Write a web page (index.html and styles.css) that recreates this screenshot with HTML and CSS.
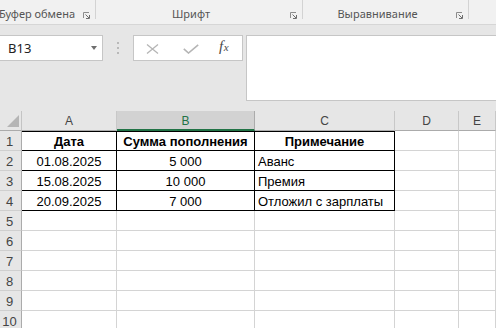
FILE: index.html
```html
<!DOCTYPE html>
<html lang="ru">
<head>
<meta charset="utf-8">
<title>Excel</title>
<link rel="stylesheet" href="styles.css">
</head>
<body>
<div class="ribbon">
  <div class="group g1"><span class="label">Буфер обмена</span><span class="launch"><svg width="7" height="7" viewBox="0 0 7 7"><path d="M0.5 6V0.5H6" fill="none" stroke="#8c8c8c"/><path d="M2.5 2.5L6 6M3 6.5H6.5V3" fill="none" stroke="#6e6e6e"/></svg></span></div>
  <div class="sep"></div>
  <div class="group g2"><span class="label">Шрифт</span><span class="launch"><svg width="7" height="7" viewBox="0 0 7 7"><path d="M0.5 6V0.5H6" fill="none" stroke="#8c8c8c"/><path d="M2.5 2.5L6 6M3 6.5H6.5V3" fill="none" stroke="#6e6e6e"/></svg></span></div>
  <div class="sep"></div>
  <div class="group g3"><span class="label">Выравнивание</span><span class="launch"><svg width="7" height="7" viewBox="0 0 7 7"><path d="M0.5 6V0.5H6" fill="none" stroke="#8c8c8c"/><path d="M2.5 2.5L6 6M3 6.5H6.5V3" fill="none" stroke="#6e6e6e"/></svg></span></div>
  <div class="sep"></div>
  <div class="group g4"></div>
</div>

<div class="fbar">
  <div class="namebox"><span class="ref">B13</span><span class="caret"></span></div>
  <div class="grip"><i></i><i></i><i></i></div>
  <div class="fbtns">
    <svg class="ico-x" width="13" height="10" viewBox="0 0 13 10"><path d="M1 0.5L12 9.5M12 0.5L1 9.5" stroke="#b5b5b5" stroke-width="1.3" fill="none"/></svg>
    <svg class="ico-ok" width="16" height="10" viewBox="0 0 16 10"><path d="M0.8 4.8L5.5 9L15.2 0.8" stroke="#b5b5b5" stroke-width="1.6" fill="none"/></svg>
    <span class="fx">f<span class="fx-x">x</span></span>
  </div>
  <div class="finput"></div>
</div>

<div class="sheet">
  <div class="corner"><span class="tri"></span></div>
  <div class="ch">A</div><div class="ch sel">B</div><div class="ch">C</div><div class="ch">D</div><div class="ch">E</div>

  <div class="rh">1</div>
  <div class="c t tt ctr bold">Дата</div>
  <div class="c t tt ctr bold">Сумма пополнения</div>
  <div class="c t tt ctr bold">Примечание</div>
  <div class="c"></div><div class="c"></div>

  <div class="rh">2</div>
  <div class="c t ctr">01.08.2025</div>
  <div class="c t ctr">5 000</div>
  <div class="c t">Аванс</div>
  <div class="c"></div><div class="c"></div>

  <div class="rh">3</div>
  <div class="c t ctr">15.08.2025</div>
  <div class="c t ctr">10 000</div>
  <div class="c t">Премия</div>
  <div class="c"></div><div class="c"></div>

  <div class="rh">4</div>
  <div class="c t ctr">20.09.2025</div>
  <div class="c t ctr">7 000</div>
  <div class="c t">Отложил с зарплаты</div>
  <div class="c"></div><div class="c"></div>

  <div class="rh">5</div><div class="c"></div><div class="c"></div><div class="c"></div><div class="c"></div><div class="c"></div>
  <div class="rh">6</div><div class="c"></div><div class="c"></div><div class="c"></div><div class="c"></div><div class="c"></div>
  <div class="rh">7</div><div class="c"></div><div class="c"></div><div class="c"></div><div class="c"></div><div class="c"></div>
  <div class="rh">8</div><div class="c"></div><div class="c"></div><div class="c"></div><div class="c"></div><div class="c"></div>
  <div class="rh">9</div><div class="c"></div><div class="c"></div><div class="c"></div><div class="c"></div><div class="c"></div>
  <div class="rh">10</div><div class="c"></div><div class="c"></div><div class="c"></div><div class="c"></div><div class="c"></div>
</div>
</body>
</html>
```

FILE: styles.css
```css
* { box-sizing: border-box; }

html, body {
  margin: 0;
  padding: 0;
}

body {
  width: 496px;
  height: 328px;
  overflow: hidden;
  background: #e6e6e6;
  font-family: "Liberation Sans", Arial, sans-serif;
  color: #000;
}

/* ---------- Ribbon group labels ---------- */
.ribbon {
  display: flex;
  height: 25px;
  background: #f1f1f1;
  border-bottom: 1px solid #d6d6d6;
  overflow: hidden;
}

.group {
  display: flex;
  align-items: flex-end;
  height: 24px;
  padding-bottom: 3px;
}

.g1 { width: 95px; }
.g2 { width: 206px; }
.g3 { width: 165px; }
.g4 { flex: 1; }

.label {
  flex: 1;
  text-align: center;
  white-space: nowrap;
  font-family: "Noto Sans", "Open Sans", sans-serif;
  font-size: 11px;
  line-height: 14px;
  color: #555;
}

.g1 .label {
  display: flex;
  justify-content: flex-end;
  padding-right: 4px;
  min-width: 0;
}

.launch {
  width: 16px;
  padding-left: 4px;
  padding-bottom: 2px;
  display: flex;
  align-items: flex-end;
  height: 14px;
}

.sep {
  width: 1px;
  height: 19px;
  background: #d3d3d3;
}

/* ---------- Formula bar ---------- */
.fbar {
  display: flex;
  align-items: flex-start;
  height: 86px;
  padding-top: 10px;
}

.namebox {
  width: 103px;
  height: 26px;
  background: #fff;
  border: 1px solid #c6c6c6;
  border-left: none;
  display: flex;
  align-items: center;
  padding: 0 5px 1px 8px;
}

.ref {
  font-family: "Noto Sans", "Open Sans", sans-serif;
  font-size: 13px;
  color: #222;
}

.caret {
  margin-left: auto;
  width: 0;
  height: 0;
  border-left: 3.5px solid transparent;
  border-right: 3.5px solid transparent;
  border-top: 4px solid #6f6f6f;
}

.grip {
  width: 30px;
  display: flex;
  flex-direction: column;
  align-items: center;
  gap: 3px;
  padding-top: 7px;
}

.grip i {
  display: block;
  width: 2px;
  height: 2px;
  background: #b9b9b9;
}

.fbtns {
  width: 110px;
  height: 26px;
  background: #fff;
  border: 1px solid #c6c6c6;
  display: flex;
  align-items: center;
  padding-left: 12px;
}

.ico-x { margin-top: 1px; }
.ico-ok { margin-left: 24px; margin-top: 2px; }

.fx {
  margin-left: 20px;
  font-family: "Liberation Serif", "DejaVu Serif", serif;
  font-style: italic;
  font-size: 15px;
  line-height: 15px;
  color: #4a4a4a;
  margin-top: -2px;
}

.fx-x {
  font-size: 11px;
  margin-left: 0.5px;
}

.finput {
  flex: 1;
  margin-left: 3px;
  height: 66px;
  background: #fff;
  border: 1px solid #c6c6c6;
  border-right: none;
}

/* ---------- Sheet ---------- */
.sheet {
  display: grid;
  grid-template-columns: 22px 95px 138px 140px 64px 1fr;
  grid-auto-rows: 20px;
}

.corner {
  background: #e6e6e6;
  border-right: 1px solid #c4c4c4;
  border-bottom: 1px solid #ababab;
  display: flex;
  justify-content: flex-end;
  align-items: flex-end;
  padding: 0 2px 3px 0;
}

.tri {
  width: 0;
  height: 0;
  border-left: 12px solid transparent;
  border-bottom: 12px solid #b5b5b5;
}

.ch {
  background: #e6e6e6;
  border-right: 1px solid #c8c8c8;
  border-bottom: 1px solid #ababab;
  text-align: center;
  font-size: 12px;
  line-height: 14px;
  padding-top: 3px;
  color: #444;
}

.ch.sel {
  background: #d2d2d2;
  color: #217346;
  border-bottom: 2px solid #217346;
  border-right-color: #ababab;
}

.rh {
  background: #e6e6e6;
  border-right: 1px solid #ababab;
  border-bottom: 1px solid #cfcfcf;
  text-align: center;
  padding: 3px 2px 0 0;
  font-size: 13px;
  line-height: 15px;
  color: #444;
}

.c {
  background: #fff;
  border-right: 1px solid #d4d4d4;
  border-bottom: 1px solid #d4d4d4;
  font-size: 13px;
  line-height: 15px;
  padding: 3px 3px 0;
  white-space: nowrap;
  overflow: hidden;
}

.c.t {
  border-right-color: #000;
  border-bottom-color: #000;
}

.c.tt {
  box-shadow: inset 0 1px 0 #000;
}

.ctr { text-align: center; }
.bold { font-weight: bold; }
```
